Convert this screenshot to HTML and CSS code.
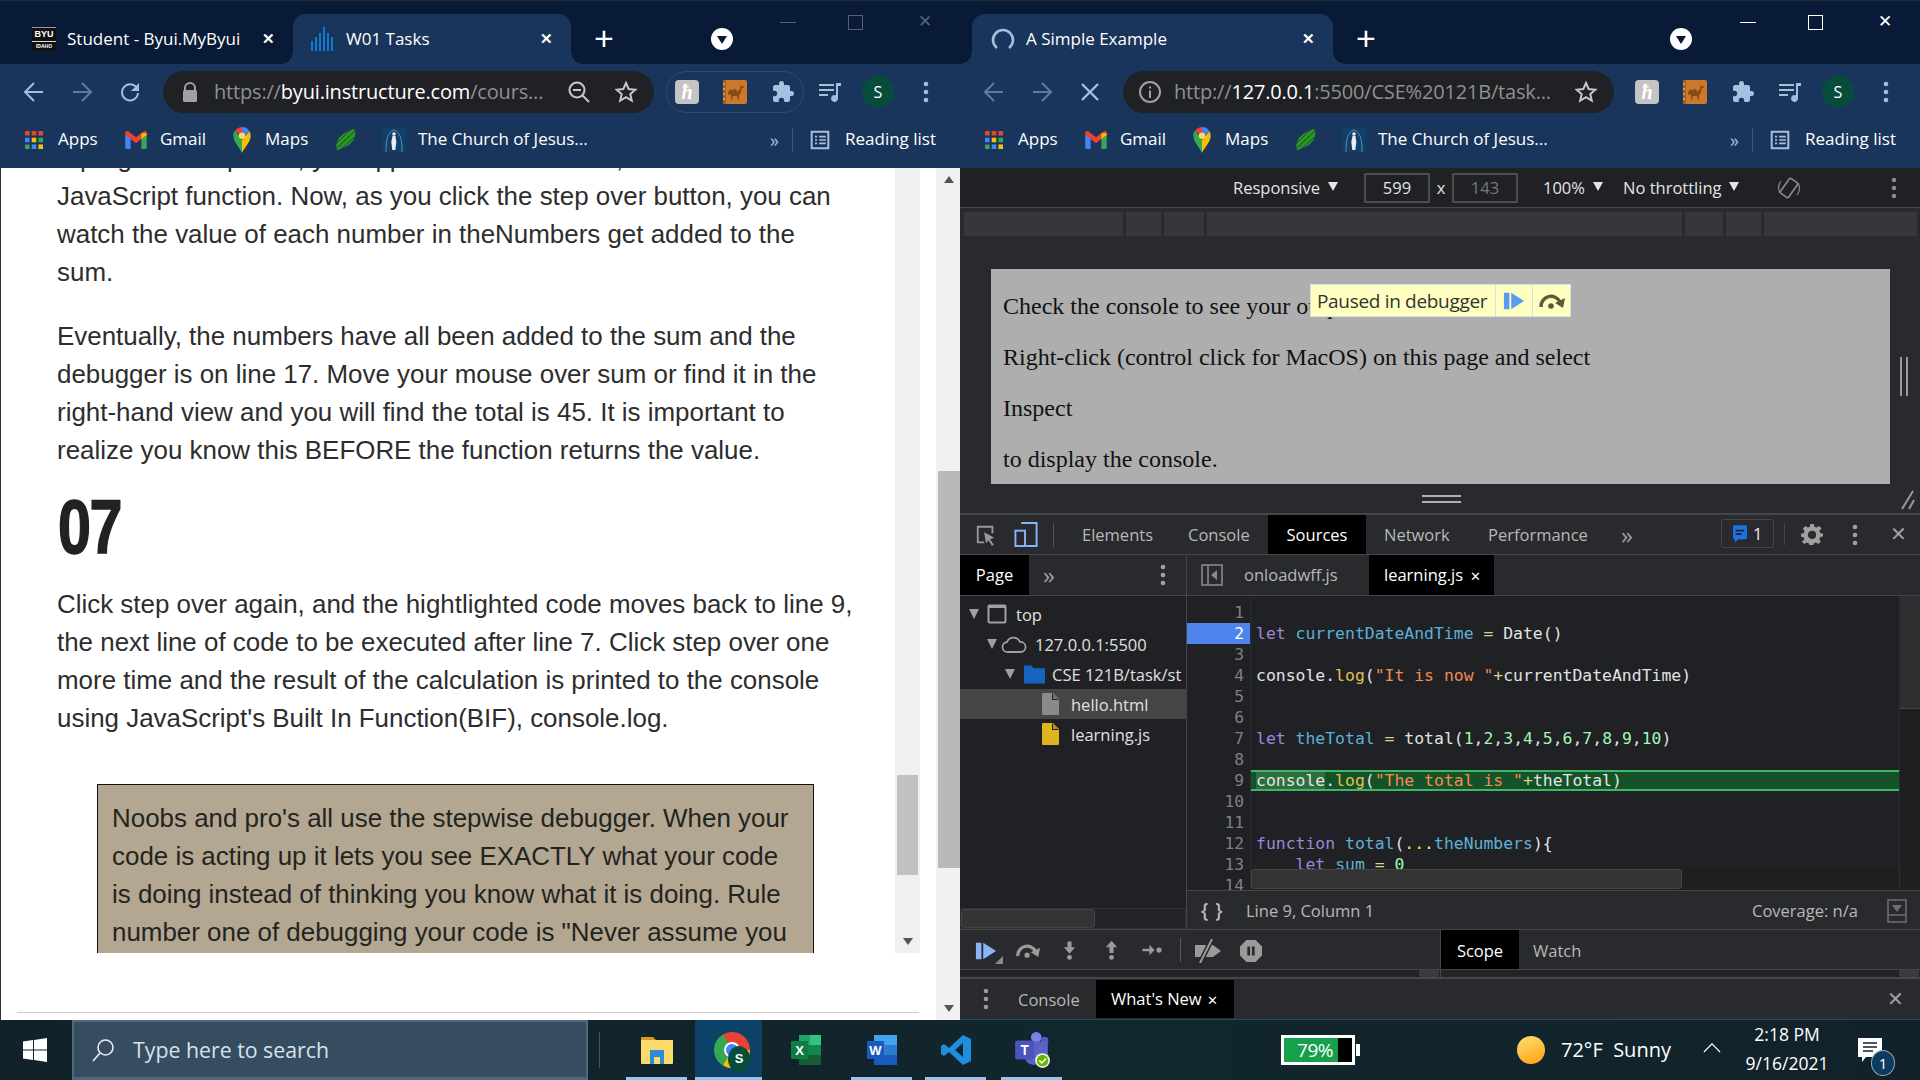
FILE: index.html
```html
<!DOCTYPE html>
<html lang="en">
<head>
<meta charset="utf-8">
<title>Debugger screenshot</title>
<link rel="stylesheet" href="styles.css">
</head>
<body>
<svg class="defs" aria-hidden="true">
  <symbol id="i-back" viewBox="0 0 24 24"><path d="M21 12H4M12 3l-9 9 9 9" fill="none" stroke="currentColor" stroke-width="2"/></symbol>
  <symbol id="i-fwd" viewBox="0 0 24 24"><path d="M3 12h17M12 3l9 9-9 9" fill="none" stroke="currentColor" stroke-width="2"/></symbol>
  <symbol id="i-reload" viewBox="0 0 24 24"><path d="M19.5 9.5A8 8 0 1 0 20 13" fill="none" stroke="currentColor" stroke-width="2"/><path d="M21 3v8h-8z" fill="currentColor"/></symbol>
  <symbol id="i-stop" viewBox="0 0 24 24"><path d="M4 4l16 16M20 4L4 20" fill="none" stroke="currentColor" stroke-width="2.4"/></symbol>
  <symbol id="i-star" viewBox="0 0 24 24"><path d="M12 3l2.7 6.1 6.6.6-5 4.4 1.5 6.5L12 17.2l-5.8 3.4 1.5-6.5-5-4.4 6.6-.6z" fill="none" stroke="currentColor" stroke-width="2"/></symbol>
  <symbol id="i-puzzle" viewBox="0 0 24 24"><path d="M20.5 11H19V7a2 2 0 0 0-2-2h-4V3.5a2.5 2.5 0 0 0-5 0V5H4a2 2 0 0 0-2 2v3.8h1.5a2.7 2.7 0 0 1 0 5.4H2V20a2 2 0 0 0 2 2h3.8v-1.5a2.7 2.7 0 0 1 5.4 0V22H17a2 2 0 0 0 2-2v-4h1.5a2.5 2.5 0 0 0 0-5z" fill="currentColor"/></symbol>
  <symbol id="i-media" viewBox="0 0 24 24"><path d="M1 4h15v2H1zM1 9h15v2H1zM1 14h9v2H1z" fill="currentColor"/><path d="M18 3h5v3h-3v12.5a3.5 3.5 0 1 1-2-3.2z" fill="currentColor"/></symbol>
  <symbol id="i-kebab" viewBox="0 0 6 24"><circle cx="3" cy="4" r="2.3" fill="currentColor"/><circle cx="3" cy="12" r="2.3" fill="currentColor"/><circle cx="3" cy="20" r="2.3" fill="currentColor"/></symbol>
  <symbol id="i-camel" viewBox="0 0 24 24"><rect width="24" height="24" rx="2" fill="#c9782c"/><rect x="0" y="0" width="3" height="24" fill="#a85f1c"/><path d="M1 3v2M1 8v2M1 13v2M1 18v2" stroke="#ffd9a8" stroke-width="1"/><path d="M5 13c1-3 3-5 5-2 1-3 3-3 4 0 1 1 2 0 3-3 0-2 1-3 3-2l1 2h-2c-1 3-1 6-3 7v5h-1l-1-4h-4l-1 4H8v-5c-1-1-2-1-2 1z" fill="#8a4b10"/></symbol>
  <symbol id="i-apps" viewBox="0 0 20 20"><path fill="#ea4335" d="M1 1h4.6v4.6H1zM7.7 1h4.6v4.6H7.7zM14.4 1H19v4.6h-4.6z"/><path fill="#4285f4" d="M1 7.7h4.6v4.6H1z"/><path fill="#fbbc04" d="M7.7 7.7h4.6v4.6H7.7z"/><path fill="#34a853" d="M14.4 7.7H19v4.6h-4.6zM1 14.4h4.6V19H1z"/><path fill="#4285f4" d="M7.7 14.4h4.6V19H7.7z"/><path fill="#fbbc04" d="M14.4 14.4H19V19h-4.6z"/></symbol>
  <symbol id="i-gmail" viewBox="0 0 24 20"><path fill="#4285f4" d="M0 4v14a2 2 0 0 0 2 2h4V8z"/><path fill="#34a853" d="M24 4v14a2 2 0 0 1-2 2h-4V8z"/><path fill="#ea4335" d="M0 2.5C0 .5 2.3-.6 4 .7L12 7l8-6.3c1.700-1.300 4-.2 4 1.800V4.500L18 9 12 13.500 6 9 0 4.500z"/><path fill="#fbbc04" d="M18 2.600L24 2.500v2L18 9z"/></symbol>
  <symbol id="i-maps" viewBox="0 0 16 24"><path fill="#34a853" d="M8 24C6 19 0 14 0 8c0-2 .6-3.500 1.700-4.800L8 12z"/><path fill="#fbbc04" d="M8 24c2-5 8-10 8-16 0-1.500-.4-2.800-1-4L8 12z"/><path fill="#4285f4" d="M15 4A8 8 0 0 0 8 0v5a3 3 0 0 1 3 3z"/><path fill="#ea4335" d="M8 0a8 8 0 0 0-6.300 3.200L5.500 7A3 3 0 0 1 8 5z"/><circle cx="8" cy="8" r="3" fill="#f5d76e"/></symbol>
  <symbol id="i-leaf" viewBox="0 0 24 24"><path d="M3 22C0 14 6 5 20 1c3 5 2 16-17 21z" fill="#2a9a1e"/><path d="M1 17L17 1M3 20L21 3M6 22L23 7M11 22l11-10" stroke="#1a355b" stroke-width=".9"/></symbol>
  <symbol id="i-temple" viewBox="0 0 24 24"><rect width="24" height="24" fill="#123f66"/><path d="M12 2c-6 2-8 8-8 22M12 2c6 2 8 8 8 22" stroke="#5c8db5" fill="none"/><circle cx="12" cy="6" r="1.800" fill="#e8eef4"/><path d="M10.500 8h3l.8 6-1 8h-3l-1-8z" fill="#e8eef4"/></symbol>
  <symbol id="i-read" viewBox="0 0 24 24"><path d="M2 2h20v20H2z" fill="none" stroke="currentColor" stroke-width="2.400"/><path d="M6 7h2.500v2H6zM11 7h8v2h-8zM6 11h2.500v2H6zM11 11h8v2h-8zM6 15h2.500v2H6zM11 15h8v2h-8z" fill="currentColor"/></symbol>
  <symbol id="i-gear" viewBox="0 0 24 24"><path fill="currentColor" fill-rule="evenodd" d="M10 1h4l.6 3 2.400 1 2.600-1.700 2.800 2.800L20 8.700l1 2.300 3 .6v3l-3 .6-1 2.400 1.700 2.600-2.800 2.800-2.600-1.700-2.400 1-.6 3h-4l-.6-3-2.400-1-2.600 1.700-2.800-2.800L3.800 17.900l-1-2.400-3-.6v-3l3-.6 1-2.300L2 6.100l2.800-2.800L7.400 5l2.400-1zM12 8.500a4.500 4.500 0 1 0 0 9 4.500 4.500 0 0 0 0-9z"/></symbol>
  <symbol id="i-file" viewBox="0 0 18 22"><path d="M1 0h10l6 6v15a1 1 0 0 1-1 1H1a1 1 0 0 1-1-1V1a1 1 0 0 1 1-1z" fill="currentColor"/><path d="M10 0l7 7h-7z" fill="#202124"/><path d="M11 1l5 5h-5z" fill="currentColor" opacity=".8"/></symbol>
  <symbol id="i-resume" viewBox="0 0 24 24"><path d="M1 3h6v18H1zM9 3l14 9-14 9z" fill="currentColor"/></symbol>
  <symbol id="i-over" viewBox="0 0 28 20"><path d="M3 16A10 10 0 0 1 22 11" fill="none" stroke="currentColor" stroke-width="3.500"/><path d="M27 7l-2 10-8-5z" fill="currentColor"/><circle cx="13" cy="15" r="2.800" fill="currentColor"/></symbol>
  <symbol id="i-into" viewBox="0 0 16 24"><path d="M5.500 1h5v7h4.500L8 16 1 8h4.500z" fill="currentColor"/><circle cx="8" cy="20.500" r="3" fill="currentColor"/></symbol>
  <symbol id="i-outof" viewBox="0 0 16 24"><path d="M8 0l7 8h-4.500v7h-5V8H1z" fill="currentColor"/><circle cx="8" cy="20.500" r="3" fill="currentColor"/></symbol>
  <symbol id="i-step" viewBox="0 0 24 16"><path d="M1 6.500h8V2l6 6-6 6V9.500H1z" fill="currentColor"/><circle cx="20" cy="8" r="3" fill="currentColor"/></symbol>
  <symbol id="i-deact" viewBox="0 0 28 24"><path d="M1 6h18l8 6-8 6H1z" fill="currentColor"/><path d="M18 0L6 24" stroke="#292a2d" stroke-width="5"/><path d="M18 0L6 24" stroke="currentColor" stroke-width="2"/></symbol>
  <symbol id="i-pause" viewBox="0 0 24 24"><path fill="currentColor" fill-rule="evenodd" d="M7 0h10l7 7v10l-7 7H7l-7-7V7zM8 7v10h3V7zM13 7v10h3V7z"/></symbol>
</svg>

<main class="windows">
  <section class="win">
    <div class="tabstrip">
      <div class="tab tab-back">
        <span class="byu">BYU<i>IDAHO</i></span>
        <span class="tab-title">Student - Byui.MyByui</span>
        <span class="tab-x">✕</span>
      </div>
      <div class="tab tab-active tab-w1">
        <svg class="fav" viewBox="0 0 24 24"><path d="M0 14h2v10H0zM4 10h2v14H4zM8 6h2v18H8zM12 0h2v24h-2zM16 6h2v18h-2zM20 10h2v14h-2z" fill="#0f7ad0"/></svg>
        <span class="tab-title">W01 Tasks</span>
        <span class="tab-x">✕</span>
      </div>
      <span class="plus plus-left">+</span>
      <span class="tabdrop tabdrop-left"></span>
      <div class="winctl winctl-dim"><span class="min"></span><span class="max"></span><span class="cls">✕</span></div>
    </div>
    <div class="toolbar">
      <span class="cell"><svg class="ic"><use href="#i-back"/></svg></span>
      <span class="cell dis"><svg class="ic"><use href="#i-fwd"/></svg></span>
      <span class="cell"><svg class="ic"><use href="#i-reload"/></svg></span>
      <div class="omni">
        <svg class="lock" viewBox="0 0 16 20"><path d="M3 9V6a5 5 0 0 1 10 0v3" fill="none" stroke="#a0a0a0" stroke-width="2"/><rect x="1" y="8" width="14" height="12" rx="1.500" fill="#a0a0a0"/></svg>
        <span class="url url-left">https://<b>byui.instructure.com</b>/cours...</span>
        <svg class="ic zoomic" viewBox="0 0 24 24"><circle cx="10" cy="10" r="7.500" fill="none" stroke="#c8c8c8" stroke-width="2"/><path d="M6 10h8M15.500 15.500L22 22" stroke="#c8c8c8" stroke-width="2"/></svg>
        <svg class="ic star"><use href="#i-star"/></svg>
      </div>
      <div class="pill">
        <span class="ext"><span class="ext-h">ħ</span></span>
        <span class="ext"><svg class="ic"><use href="#i-camel"/></svg></span>
        <span class="ext"><svg class="ic puzzle"><use href="#i-puzzle"/></svg></span>
      </div>
      <span class="cell media"><svg class="ic"><use href="#i-media"/></svg></span>
      <span class="cell cell-av"><span class="avatar">S</span></span>
      <span class="cell"><svg class="kebab"><use href="#i-kebab"/></svg></span>
    </div>
    <div class="bookmarks">
      <span class="bm bm-apps"><svg class="bmi"><use href="#i-apps"/></svg>Apps</span>
      <span class="bm bm-gmail"><svg class="bmi"><use href="#i-gmail"/></svg>Gmail</span>
      <span class="bm bm-maps"><svg class="bmi"><use href="#i-maps"/></svg>Maps</span>
      <span class="bm bm-leaf"><svg class="bmi"><use href="#i-leaf"/></svg></span>
      <span class="bm bm-temple"><svg class="bmi"><use href="#i-temple"/></svg>The Church of Jesus...</span>
      <span class="bm-more">»</span>
      <span class="bm-reading"><svg class="bmi readi"><use href="#i-read"/></svg>Reading list</span>
    </div>
    <div class="page">
      <div class="frame">
        <article class="article">
          <p>A program will pause, you appear in the total line, or in the<br>JavaScript function. Now, as you click the step over button, you can<br>watch the value of each number in theNumbers get added to the<br>sum.</p>
          <p>Eventually, the numbers have all been added to the sum and the<br>debugger is on line 17. Move your mouse over sum or find it in the<br>right-hand view and you will find the total is 45. It is important to<br>realize you know this BEFORE the function returns the value.</p>
          <h2 class="stepnum">07</h2>
          <p>Click step over again, and the hightlighted code moves back to line 9,<br>the next line of code to be executed after line 7. Click step over one<br>more time and the result of the calculation is printed to the console<br>using JavaScript's Built In Function(BIF), console.log.</p>
          <div class="callout">Noobs and pro's all use the stepwise debugger. When your<br>code is acting up it lets you see EXACTLY what your code<br>is doing instead of thinking you know what it is doing. Rule<br>number one of debugging your code is "Never assume you</div>
        </article>
        <div class="vbar vbar-inner"><span class="arr-up"></span><span class="arr-dn"></span><span class="vthumb"></span></div>
      </div>
      <div class="pagefoot"><span class="footline"></span></div>
      <div class="vbar vbar-outer"><span class="arr-up"></span><span class="arr-dn"></span><span class="vthumb"></span></div>
    </div>
  </section>

  <section class="win">
    <div class="tabstrip tabstrip-r">
      <div class="tab tab-active tab-simple">
        <svg class="fav" viewBox="0 0 24 24"><path d="M6 21A10 10 0 1 1 18 21" fill="none" stroke="#a9bcd9" stroke-width="2.600"/></svg>
        <span class="tab-title">A Simple Example</span>
        <span class="tab-x">✕</span>
      </div>
      <span class="plus plus-right">+</span>
      <span class="tabdrop tabdrop-right"></span>
      <div class="winctl"><span class="min"></span><span class="max"></span><span class="cls">✕</span></div>
    </div>
    <div class="toolbar">
      <span class="cell dis"><svg class="ic"><use href="#i-back"/></svg></span>
      <span class="cell dis"><svg class="ic"><use href="#i-fwd"/></svg></span>
      <span class="cell"><svg class="ic"><use href="#i-stop"/></svg></span>
      <div class="omni">
        <svg class="lock info" viewBox="0 0 24 24"><circle cx="12" cy="12" r="10" fill="none" stroke="#a0a0a0" stroke-width="2"/><path d="M11 10.500h2V18h-2zM11 6.500h2v2h-2z" fill="#a0a0a0"/></svg>
        <span class="url url-right">http://<b>127.0.0.1</b>:5500/CSE%20121B/task...</span>
        <svg class="ic star"><use href="#i-star"/></svg>
      </div>
      <div class="pill pill-none">
        <span class="ext"><span class="ext-h">ħ</span></span>
        <span class="ext"><svg class="ic"><use href="#i-camel"/></svg></span>
        <span class="ext"><svg class="ic puzzle"><use href="#i-puzzle"/></svg></span>
      </div>
      <span class="cell media"><svg class="ic"><use href="#i-media"/></svg></span>
      <span class="cell cell-av"><span class="avatar">S</span></span>
      <span class="cell"><svg class="kebab"><use href="#i-kebab"/></svg></span>
    </div>
    <div class="bookmarks">
      <span class="bm bm-apps"><svg class="bmi"><use href="#i-apps"/></svg>Apps</span>
      <span class="bm bm-gmail"><svg class="bmi"><use href="#i-gmail"/></svg>Gmail</span>
      <span class="bm bm-maps"><svg class="bmi"><use href="#i-maps"/></svg>Maps</span>
      <span class="bm bm-leaf"><svg class="bmi"><use href="#i-leaf"/></svg></span>
      <span class="bm bm-temple"><svg class="bmi"><use href="#i-temple"/></svg>The Church of Jesus...</span>
      <span class="bm-more">»</span>
      <span class="bm-reading"><svg class="bmi readi"><use href="#i-read"/></svg>Reading list</span>
    </div>

    <div class="devicebar">
      <span class="db-responsive">Responsive<i class="tri"></i></span>
      <span class="db-input">599</span>
      <span class="db-x">x</span>
      <span class="db-input db-dim">143</span>
      <span class="db-zoom">100%<i class="tri"></i></span>
      <span class="db-throttle">No throttling<i class="tri"></i></span>
      <svg class="db-rot" viewBox="0 0 24 24"><rect x="7" y="3" width="10" height="18" rx="1.500" transform="rotate(35 12 12)" fill="none" stroke="#8a8a8a" stroke-width="1.600"/><path d="M4 5A11 11 0 0 0 3 17M20 19A11 11 0 0 0 21 7" fill="none" stroke="#8a8a8a" stroke-width="1.200"/></svg>
      <svg class="kebab db-menu"><use href="#i-kebab"/></svg>
    </div>
    <div class="emul">
      <div class="mediabar"><span class="mb1"></span><span class="mb2"></span><span class="mb3"></span><span class="mb4"></span><span class="mb5"></span><span class="mb6"></span><span class="mb7"></span></div>
      <div class="viewport">
        <p>Check the console to see your output.</p>
        <p>Right-click (control click for MacOS) on this page and select</p>
        <p>Inspect</p>
        <p>to display the console.</p>
        <div class="paused">
          <span class="paused-t">Paused in debugger</span>
          <span class="paused-b"><svg class="pb-res"><use href="#i-resume"/></svg></span>
          <span class="paused-b"><svg class="pb-over"><use href="#i-over"/></svg></span>
        </div>
      </div>
      <span class="vp-handle"></span>
      <span class="vp-bottom"></span>
      <svg class="vp-corner" viewBox="0 0 14 20"><path d="M1 19L12 1M8 19l5-9" stroke="#9a9a9a" stroke-width="2" fill="none"/></svg>
    </div>

    <div class="devtools">
      <div class="dt-tabs">
        <svg class="dt-inspect" viewBox="0 0 22 24"><path d="M9 20H2V3h16v7" fill="none" stroke="#9a9a9a" stroke-width="2"/><path d="M9 9l11 6-4.500 1.500 4 6-2 1.200-3.800-6L11 21z" fill="#9a9a9a"/></svg>
        <svg class="dt-device" viewBox="0 0 24 26"><path d="M7 1h16v24H10" fill="none" stroke="#8ab4f8" stroke-width="2"/><rect x="1" y="9" width="10" height="16" fill="none" stroke="#8ab4f8" stroke-width="2"/></svg>
        <span class="dt-sep"></span>
        <span class="dt-tab t-el">Elements</span>
        <span class="dt-tab t-con">Console</span>
        <span class="dt-tab t-src on">Sources</span>
        <span class="dt-tab t-net">Network</span>
        <span class="dt-tab t-perf">Performance</span>
        <span class="chev">»</span>
        <span class="issues"><svg viewBox="0 0 16 20"><path d="M2 0h12a2 2 0 0 1 2 2v12a2 2 0 0 1-2 2H6l-4 4v-4a2 2 0 0 1-2-2V2a2 2 0 0 1 2-2z" fill="#1a73e8"/><path d="M3 5h10v2H3zM3 9h7v2H3z" fill="#202124"/></svg>1</span>
        <span class="dt-sep2"></span>
        <svg class="dt-gear"><use href="#i-gear"/></svg>
        <svg class="kebab dt-kebab"><use href="#i-kebab"/></svg>
        <span class="dt-close">✕</span>
      </div>
      <div class="src">
        <aside class="side">
          <div class="side-tabs"><span class="side-page">Page</span><span class="chev side-chev">»</span><svg class="kebab side-kebab"><use href="#i-kebab"/></svg></div>
          <ul class="tree">
            <li class="l0"><i class="caret"></i><svg class="t-frame" viewBox="0 0 20 20"><rect x="1.500" y="1.500" width="17" height="17" rx="1" fill="none" stroke="#a0a0a0" stroke-width="2"/><path d="M1 1h18v3H1z" fill="#a0a0a0"/></svg>top</li>
            <li class="l1"><i class="caret"></i><svg class="t-cloud" viewBox="0 0 26 20"><path d="M7 18a5 5 0 0 1-1-10 7 7 0 0 1 13 0 5 5 0 0 1 1 10z" fill="none" stroke="#a0a0a0" stroke-width="1.800"/></svg>127.0.0.1:5500</li>
            <li class="l2"><i class="caret"></i><svg class="t-folder" viewBox="0 0 22 20"><path d="M0 1h8l2 3h12v16H0z" fill="#1565c0"/></svg><span class="clip">CSE 121B/task/st</span></li>
            <li class="l3 sel"><svg class="t-file f-grey"><use href="#i-file"/></svg>hello.html</li>
            <li class="l3"><svg class="t-file f-js"><use href="#i-file"/></svg>learning.js</li>
          </ul>
          <div class="side-scroll"><span></span></div>
        </aside>
        <div class="editor">
          <div class="ed-tabs">
            <svg class="ed-toggle" viewBox="0 0 22 22"><rect x="1" y="1" width="20" height="20" fill="none" stroke="#8a8a8a" stroke-width="1.600"/><path d="M7 1v20" stroke="#8a8a8a" stroke-width="1.600"/><path d="M16 6v10l-6-5z" fill="#8a8a8a"/></svg>
            <span class="ed-tab">onloadwff.js</span>
            <span class="ed-tab on">learning.js <b>✕</b></span>
          </div>
          <div class="ed-body">
            <div class="gutter">
              <span>1</span><span class="exec">2</span><span>3</span><span>4</span><span>5</span><span>6</span><span>7</span><span>8</span><span>9</span><span>10</span><span>11</span><span>12</span><span>13</span><span>14</span>
            </div>
            <div class="code-wrap">
              <div class="code">
                <div class="ln"></div>
                <div class="ln"><em class="k">let</em> <em class="v">currentDateAndTime</em> <em class="o">=</em> Date()</div>
                <div class="ln"></div>
                <div class="ln">console.<em class="m">log</em>(<em class="s">"It is now "</em><em class="o">+</em>currentDateAndTime)</div>
                <div class="ln"></div>
                <div class="ln"></div>
                <div class="ln"><em class="k">let</em> <em class="v">theTotal</em> <em class="o">=</em> total(<em class="n">1</em>,<em class="n">2</em>,<em class="n">3</em>,<em class="n">4</em>,<em class="n">5</em>,<em class="n">6</em>,<em class="n">7</em>,<em class="n">8</em>,<em class="n">9</em>,<em class="n">10</em>)</div>
                <div class="ln"></div>
                <div class="ln ln-exec"><mark>console</mark>.<em class="m">log</em>(<em class="s">"The total is "</em><em class="o">+</em>theTotal)</div>
                <div class="ln"></div>
                <div class="ln"></div>
                <div class="ln"><em class="k">function</em> <em class="v">total</em>(<em class="y">...</em><em class="v">theNumbers</em>){</div>
                <div class="ln">    <em class="k">let</em> <em class="v">sum</em> <em class="o">=</em> <em class="n">0</em></div>
              </div>
              <div class="hscroll"><span></span></div>
            </div>
            <div class="vscroll"><span></span></div>
          </div>
          <div class="statusbar">
            <span class="st-braces">{ }</span>
            <span class="st-pos">Line 9, Column 1</span>
            <span class="st-cov">Coverage: n/a</span>
            <svg class="st-icon" viewBox="0 0 20 24"><rect x="1" y="1" width="18" height="22" fill="none" stroke="#707070" stroke-width="1.500"/><path d="M1 16h18" stroke="#707070" stroke-width="1.500"/><path d="M5 6h10l-5 7z" fill="#707070"/></svg>
          </div>
        </div>
      </div>
      <div class="dbg">
        <div class="dbg-left">
          <div class="dbg-tools">
            <span class="dbg-resume"><svg class="d-res"><use href="#i-resume"/></svg></span>
            <svg class="d-over"><use href="#i-over"/></svg>
            <svg class="d-into"><use href="#i-into"/></svg>
            <svg class="d-out"><use href="#i-outof"/></svg>
            <svg class="d-step"><use href="#i-step"/></svg>
            <span class="d-sep"></span>
            <svg class="d-deact"><use href="#i-deact"/></svg>
            <svg class="d-pause"><use href="#i-pause"/></svg>
          </div>
          <div class="dbg-scroll"><span></span></div>
        </div>
        <div class="dbg-right">
          <div class="dbg-tabs"><span class="scope">Scope</span><span class="watch">Watch</span></div>
          <div class="dbg-scroll"><span></span></div>
        </div>
      </div>
      <div class="drawer">
        <svg class="kebab dr-kebab"><use href="#i-kebab"/></svg>
        <span class="dr-con">Console</span>
        <span class="dr-new">What's New <b>✕</b></span>
        <span class="dr-close">✕</span>
      </div>
    </div>
  </section>
</main>

<footer class="taskbar">
  <svg class="tb-win" viewBox="0 0 24 24"><path d="M0 3.500l10-1.400V11.500H0zM11 2l13-2v11.500H11zM0 12.500h10v9.500L0 20.500zM11 12.500h13V24l-13-2z" fill="#fff"/></svg>
  <div class="tb-search">
    <svg viewBox="0 0 24 24"><circle cx="14.500" cy="9.500" r="7.500" fill="none" stroke="#e8eef2" stroke-width="1.600"/><path d="M9 15L2 23" stroke="#e8eef2" stroke-width="1.600"/></svg>
    <span>Type here to search</span>
  </div>
  <span class="tb-grip"></span>
  <span class="tb-app a-files"><svg viewBox="0 0 32 30"><path d="M0 2h12l3 3H0z" fill="#d89a1a"/><path d="M0 5h32v23a1 1 0 0 1-1 1H1a1 1 0 0 1-1-1z" fill="#fbd96a"/><path d="M9 15h14v14h-4v-7h-6v7H9z" fill="#2d8ad8"/></svg></span>
  <span class="tb-app a-chrome on"><span class="chrome"><i></i></span><span class="chrome-s">S</span></span>
  <span class="tb-app a-excel"><svg viewBox="0 0 32 32"><path d="M9 1h22v30H9z" fill="#21a366"/><path d="M20 1h11v10H20z" fill="#33c481"/><path d="M9 11h22v10H9z" fill="#107c41" opacity=".7"/><path d="M9 21h22v10H9z" fill="#185c37"/><rect x="1" y="7" width="17" height="18" fill="#107c41"/><text x="9.500" y="21" class="svgt">X</text></svg></span>
  <span class="tb-app a-word"><svg viewBox="0 0 32 32"><path d="M8 1h23v30H8z" fill="#2b7cd3"/><path d="M8 1h23v10H8z" fill="#41a5ee"/><path d="M8 21h23v10H8z" fill="#185abd"/><rect x="1" y="7" width="17" height="18" fill="#185abd"/><text x="9.500" y="21" class="svgt">W</text></svg></span>
  <span class="tb-app a-code"><svg viewBox="0 0 32 32"><path d="M23 1l8 4v22l-8 4L9 18l-5 4-3-2v-8l3-2 5 4zM23 9l-8 7 8 7z" fill="#1e8fdc"/></svg></span>
  <span class="tb-app a-teams"><svg viewBox="0 0 34 36"><circle cx="21" cy="6" r="5" fill="#7b83eb"/><circle cx="29" cy="9" r="3.500" fill="#5059c9"/><path d="M10 10h22v16a6 6 0 0 1-6 6h-8a8 8 0 0 1-8-8z" fill="#5b63c9"/><rect x="1" y="9" width="18" height="18" rx="2" fill="#4b53bc"/><text x="10" y="23" class="svgt">T</text><circle cx="27" cy="28" r="7" fill="#f4f4f4"/><circle cx="27" cy="28" r="5.500" fill="#6bb700"/><path d="M24 28l2.300 2.300 4-4.300" stroke="#fff" stroke-width="1.500" fill="none"/></svg></span>
  <span class="tb-batt"><span class="batt-box"><span class="batt-fill">79%</span></span><i></i></span>
  <span class="tb-sun"></span>
  <span class="tb-weather">72°F&nbsp; Sunny</span>
  <svg class="tb-caret" viewBox="0 0 20 12"><path d="M1 11l9-9 9 9" fill="none" stroke="#fff" stroke-width="1.300"/></svg>
  <span class="tb-clock"><span>2:18 PM</span><span>9/16/2021</span></span>
  <span class="tb-note"><svg viewBox="0 0 24 26"><path d="M0 0h24v19H8l-4 5v-5H0z" fill="#fff"/><path d="M5 5h14M5 9h14M5 13h10" stroke="#11222a" stroke-width="1.300"/></svg><b>1</b></span>
</footer>
</body>
</html>
```

FILE: styles.css
```css
* { box-sizing: border-box; }
html, body { margin: 0; padding: 0; }
body {
  width: 1920px; height: 1080px; overflow: hidden;
  display: flex; flex-direction: column;
  font-family: "Open Sans", "Noto Sans", sans-serif;
  background: #11222a; color: #fff;
}
.defs { position: absolute; width: 0; height: 0; }
svg { display: block; flex: none; }
ul { list-style: none; margin: 0; padding: 0; }

.windows { display: grid; grid-template-columns: 960px 960px; height: 1020px; }
.win { display: flex; flex-direction: column; height: 1020px; min-width: 0; overflow: hidden; }

/* tab strip */
.tabstrip { height: 64px; background: #081a36; display: flex; align-items: flex-end; font-size: 17px; border-top: 1px solid #1e2a3a; flex: none; }
.tabstrip-r { padding-left: 12px; }
.tab { height: 50px; display: flex; align-items: center; position: relative; flex: none; }
.tab-active { background: #1a355b; border-radius: 13px 13px 0 0; }
.tab-active::before, .tab-active::after { content: ""; position: absolute; bottom: 0; width: 12px; height: 12px; }
.tab-active::before { left: -12px; background: radial-gradient(circle at 0 0, transparent 11.500px, #1a355b 12px); }
.tab-active::after { right: -12px; background: radial-gradient(circle at 100% 0, transparent 11.500px, #1a355b 12px); }
.tab-back { width: 293px; padding-left: 32px; }
.tab-w1 { width: 278px; padding-left: 18px; }
.tab-simple { width: 361px; padding-left: 19px; }
.tab-title { white-space: nowrap; margin-left: 11px; padding-bottom: 2px; }
.tab-x { position: absolute; font-size: 15px; font-weight: 700; top: 14px; }
.tab-back .tab-x { left: 262px; }
.tab-w1 .tab-x { left: 247px; }
.tab-simple .tab-x { left: 330px; }
.byu { width: 24px; height: 24px; background: #111; font: bold 9px/11px "Liberation Sans", sans-serif; text-align: center; letter-spacing: 0; border-top: 1px solid #999; display: block; padding-top: 1px; }
.byu i { display: block; font-style: normal; font-size: 5px; line-height: 8px; border-top: 1px solid #ddd; margin-top: 1px; }
.fav { width: 24px; height: 24px; }
.plus { font: 400 34px/34px "Liberation Sans", sans-serif; align-self: flex-start; margin-top: 20px; flex: none; }
.plus-left { margin-left: 23px; }
.plus-right { margin-left: 23px; }
.tabdrop { width: 22px; height: 22px; border-radius: 50%; background: #fff; align-self: flex-start; margin-top: 27px; position: relative; flex: none; }
.tabdrop::after { content: ""; position: absolute; left: 6px; top: 8px; border: 5px solid transparent; border-top: 8px solid #081a36; border-bottom: 0; }
.tabdrop-left { margin-left: 97px; }
.tabdrop-right { margin-left: 294px; }
.winctl { display: flex; align-self: flex-start; margin-left: auto; width: 180px; height: 40px; position: relative; }
.winctl span { position: absolute; }
.winctl .min { left: 0; top: 21px; width: 16px; height: 1px; background: #fff; }
.winctl .max { left: 68px; top: 14px; width: 15px; height: 15px; border: 1px solid #fff; }
.winctl .cls { left: 138px; top: 10px; font-size: 17px; font-weight: 300; color: #fff; font-family: "Liberation Sans", sans-serif; }
.winctl-dim { opacity: .3; }

/* toolbar */
.toolbar { height: 54px; background: #1a355b; display: flex; align-items: center; padding: 2px 0 0 10px; flex: none; color: #a9bcd9; }
.cell { width: 48px; height: 40px; display: flex; align-items: center; justify-content: center; flex: none; }
.cell.dis { color: #5f7aa0; }
.ic { width: 24px; height: 24px; }
.omni { width: 491px; height: 42px; margin-left: 9px; background: #202124; border-radius: 21px; display: flex; align-items: center; position: relative; color: #c8c8c8; flex: none; }
.lock { width: 16px; height: 20px; margin-left: 19px; }
.lock.info { width: 24px; height: 24px; margin-left: 15px; }
.url { font-size: 20px; line-height: 24px; color: #8f9092; white-space: nowrap; margin-left: 16px; letter-spacing: -.18px; flex: none; }
.url-right { margin-left: 12px; }
.url b { color: #fff; font-weight: 400; }
.zoomic { position: absolute; left: 404px; top: 9px; }
.star { position: absolute; left: 451px; top: 9px; }
.pill { width: 138px; height: 42px; margin-left: 12px; border: 1px solid #32496e; border-radius: 21px; display: flex; flex: none; align-items: center; }
.pill-none { border-color: transparent; }
.ext { width: 48px; height: 40px; display: flex; align-items: center; justify-content: center; flex: none; }
.ext:first-child { margin-left: -4px; }
.ext-h { width: 24px; height: 24px; border-radius: 4px; background: #c4c4c4; color: #fff; font: italic 700 20px/24px "Liberation Serif", serif; text-align: center; }
.puzzle { color: #a9bfe0; }
.media { margin-left: 2px; }
.avatar { width: 32px; height: 32px; border-radius: 50%; background: #064e3b; color: #fff; font-size: 16px; line-height: 32px; text-align: center; }
.kebab { width: 6px; height: 24px; color: #a9bcd9; }

/* bookmarks */
.bookmarks { height: 50px; background: #1a355b; display: flex; align-items: center; padding: 0 0 6px 24px; font-size: 17px; flex: none; position: relative; }
.bm { display: flex; align-items: center; flex: none; white-space: nowrap; line-height: 22px; padding-bottom: 2px; }
.bmi { width: 20px; height: 20px; margin-right: 14px; margin-bottom: -2px; }
.bm-apps { width: 101px; }
.bm-gmail { width: 107px; }
.bm-gmail .bmi { width: 22px; height: 18px; margin-right: 13px; }
.bm-maps { width: 102px; }
.bm-maps .bmi { margin-right: 13px; height: 26px; }
.bm-leaf { width: 48px; }
.bm-leaf .bmi { width: 24px; height: 24px; }
.bm-temple { width: 388px; }
.bm-temple .bmi { width: 24px; height: 24px; margin-right: 12px; }
.bm-more { font-size: 18px; color: #a9bcd9; width: 28px; }
.bm-reading { display: flex; align-items: center; border-left: 1px solid #3e5880; height: 24px; padding: 0 0 2px 17px; margin-left: -6px; line-height: 22px; }
.readi { color: #a9bcd9; margin-right: 15px; margin-bottom: -2px; }

/* left page */
.page { flex: 1; min-height: 0; background: #fff; display: grid; grid-template-columns: 935px 25px; grid-template-rows: 785px 1fr; color: #2d2d2d; border-left: 1px solid #333; font-family: "Liberation Sans", Arial, sans-serif; }
.frame { display: flex; min-height: 0; overflow: hidden; grid-column: 1; grid-row: 1; padding-right: 16px; }
.article { flex: 1; min-width: 0; padding-left: 56px; margin-top: -29px; font-size: 25.930px; line-height: 38px; }
.article p { margin: 0 0 26px; white-space: nowrap; }
.stepnum { margin: 0 0 26px; height: 64px; font: 700 76px/64px "Liberation Sans", sans-serif; color: #222; transform: translateX(1px) scaleX(.78); transform-origin: left; letter-spacing: -2px; -webkit-text-stroke: 1.500px #222; }
.callout { width: 717px; height: 200px; margin: 47px 0 0 40px; background: #b3a792; border: 1px solid #111; padding: 14px 0 0 14px; white-space: nowrap; color: #24241f; }
.vbar { background: #f0f0f0; position: relative; flex: none; }
.vbar-inner { width: 25px; height: 785px; }
.vbar-inner .vthumb { position: absolute; left: 2px; right: 2px; top: 607px; height: 100px; background: #c1c1c1; }
.vbar-outer { grid-column: 2; grid-row: 1 / 3; background: #f1f1f1; }
.vbar-outer .vthumb { position: absolute; left: 2px; right: 1px; top: 303px; height: 397px; background: #b9b9b9; }
.arr-up, .arr-dn { position: absolute; left: 8px; border: 5px solid transparent; }
.arr-up { top: 8px; border-bottom: 7px solid #555; border-top: 0; }
.arr-dn { bottom: 8px; border-top: 7px solid #555; border-bottom: 0; }
.vbar-inner .arr-up { display: none; }
.pagefoot { grid-column: 1; grid-row: 2; padding: 59px 0 0 16px; }
.footline { display: block; width: 902px; height: 1px; background: #c7cdd1; }

/* device toolbar */
.devicebar { height: 40px; background: #202124; border-bottom: 1px solid #4a4a4a; display: flex; align-items: center; font-size: 16.500px; color: #e4e4e4; flex: none; white-space: nowrap; }
.tri { display: inline-block; margin-left: 8px; border: 5px solid transparent; border-top: 9px solid #e4e4e4; border-bottom: 0; vertical-align: 3px; }
.db-responsive { margin-left: 273px; width: 131px; }
.db-input { width: 66px; height: 30px; border: 2px solid #4c4d50; text-align: center; line-height: 26px; flex: none; }
.db-dim { color: #77787a; }
.db-x { width: 22px; text-align: center; }
.db-zoom { margin-left: 25px; width: 80px; }
.db-throttle { width: 130px; }
.db-rot { width: 24px; height: 24px; margin-left: 24px; }
.db-menu { margin-left: 90px; color: #8a8a8a; }

.emul { height: 305px; background: #292a2d; position: relative; flex: none; padding-top: 4px; }
.mediabar { height: 24px; margin: 0 3px 0 4px; display: grid; grid-template-columns: 159px 35px 40px 475px 38px 35px 1fr; column-gap: 3px; }
.mediabar span { background: #36373b; }
.viewport { width: 899px; height: 215px; margin: 33px 0 0 31px; background: #aeaeae; color: #111; font: 24px/27px "Liberation Serif", "Times New Roman", serif; padding: 24px 12px; position: relative; }
.viewport p { margin: 0 0 24px; }
.paused { position: absolute; left: 319px; top: 15px; width: 261px; height: 33px; background: #ffffc2; border: 1px solid #ddd; display: flex; align-items: center; color: #333; font: 19px/32px "Open Sans", sans-serif; letter-spacing: -.32px; }
.paused-t { width: 186px; padding-left: 6px; white-space: nowrap; border-right: 1px solid #ddd; height: 31px; }
.paused-b { width: 37px; height: 31px; border-right: 1px solid #ddd; display: flex; align-items: center; justify-content: center; }
.paused-b:last-child { border: 0; }
.pb-res { width: 22px; height: 22px; color: #5b9bf0; }
.pb-over { width: 28px; height: 20px; color: #5b5b3c; }
.vp-handle { position: absolute; left: 940px; top: 149px; width: 8px; height: 39px; border-left: 2px solid #9a9a9a; border-right: 2px solid #9a9a9a; }
.vp-bottom { position: absolute; left: 462px; top: 287px; width: 39px; height: 8px; border-top: 2px solid #b0b0b0; border-bottom: 2px solid #b0b0b0; }
.vp-corner { position: absolute; right: 5px; top: 282px; width: 14px; height: 20px; }

/* devtools */
.devtools { flex: 1; min-height: 0; background: #292a2d; border-top: 2px solid #45474a; display: flex; flex-direction: column; color: #b8b8b8; font-size: 16.500px; }
.dt-tabs { height: 40px; display: flex; align-items: center; flex: none; border-bottom: 1px solid #45474a; position: relative; white-space: nowrap; }
.dt-inspect { width: 22px; height: 22px; margin-left: 15px; }
.dt-device { width: 24px; height: 25px; margin-left: 17px; }
.dt-sep { width: 1px; height: 24px; background: #55575a; margin: 0 8px 0 15px; }
.dt-tab { height: 39px; line-height: 39px; flex: none; }
.t-el { margin-left: 20px; width: 106px; }
.t-con { width: 80px; }
.t-src { width: 98px; text-align: center; }
.t-src.on { background: #000; color: #fff; }
.t-net { margin-left: 18px; width: 104px; }
.t-perf { width: 133px; }
.chev { font-size: 24px; line-height: 30px; color: #a0a0a0; }
.issues { position: absolute; left: 761px; top: 4px; width: 53px; height: 29px; border: 1px solid #45474a; border-radius: 3px; display: flex; align-items: center; gap: 6px; padding-left: 11px; color: #e8e8e8; }
.issues svg { width: 14px; height: 18px; }
.dt-sep2 { position: absolute; left: 824px; top: 8px; width: 1px; height: 22px; background: #45474a; }
.dt-gear { position: absolute; left: 841px; top: 8px; width: 22px; height: 22px; color: #a0a0a0; }
.dt-kebab { position: absolute; left: 892px; top: 8px; color: #a0a0a0; }
.dt-close { position: absolute; left: 930px; top: 5px; font-size: 20px; color: #a0a0a0; }

.src { display: grid; grid-template-columns: 227px 1fr; height: 375px; flex: none; border-bottom: 1px solid #45474a; }
.side { display: flex; flex-direction: column; border-right: 1px solid #45474a; background: #202124; min-width: 0; }
.side-tabs { height: 41px; background: #292a2d; border-bottom: 1px solid #45474a; display: flex; align-items: center; flex: none; position: relative; }
.side-page { width: 69px; height: 40px; background: #000; color: #fff; text-align: center; line-height: 40px; }
.side-chev { margin-left: 14px; }
.side-kebab { position: absolute; left: 200px; top: 8px; color: #a0a0a0; }
.tree { flex: 1; padding-top: 3px; color: #e0e0e0; }
.tree li { height: 30px; display: flex; align-items: center; white-space: nowrap; overflow: hidden; }
.caret { display: block; border: 5.500px solid transparent; border-top: 10px solid #a0a0a0; border-bottom: 0; flex: none; }
.l0 { padding-left: 9px; }
.l0 .t-frame { width: 20px; height: 20px; margin: 0 9px 0 8px; }
.l1 { padding-left: 27px; }
.l1 .t-cloud { width: 26px; height: 22px; margin: 0 8px 0 4px; }
.l2 { padding-left: 45px; }
.t-folder { width: 21px; height: 20px; margin: 0 7px 0 9px; }
.l3 { padding-left: 82px; }
.sel { background: #454545; margin-top: 0; }
.t-file { width: 18px; height: 24px; margin-right: 11px; }
.f-grey { color: #8a8a8a; }
.f-js { color: #e0b420; }
.clip { overflow: hidden; width: 135px; }
.side-scroll { height: 21px; background: #232427; flex: none; border: 1px solid #2e2f32; }
.side-scroll span { display: block; width: 134px; height: 19px; background: #333436; border-radius: 3px; border: 1px solid #444; }

.editor { display: flex; flex-direction: column; min-width: 0; }
.ed-tabs { height: 41px; border-bottom: 1px solid #45474a; display: flex; align-items: center; flex: none; }
.ed-toggle { width: 22px; height: 22px; margin-left: 14px; }
.ed-tab { height: 40px; line-height: 40px; flex: none; white-space: nowrap; }
.ed-tab:nth-of-type(1) { margin-left: 21px; width: 125px; }
.ed-tab.on { background: #000; color: #fff; width: 125px; padding-left: 15px; }
.ed-tab b { font-weight: 400; font-size: 13px; margin-left: 3px; }
.ed-body { height: 294px; display: flex; background: #202124; flex: none; }
.gutter { width: 64px; padding-top: 6px; flex: none; border-right: 1px solid #2c2d30; font: 16.300px/21px "DejaVu Sans Mono", monospace; color: #7e8084; text-align: right; overflow: hidden; }
.gutter span { display: block; height: 21px; padding-right: 6px; }
.gutter .exec { background: #4f84ec; color: #fff; position: relative; }
.gutter .exec::after { content: ""; position: absolute; right: -4px; top: 0; border: 10.500px solid transparent; border-left: 4px solid #4f84ec; border-right: 0; }
.code-wrap { flex: 1; min-width: 0; display: flex; flex-direction: column; }
.code { height: 273px; padding-top: 6px; overflow: hidden; font: 16.430px/21px "DejaVu Sans Mono", monospace; color: #e3e3e3; flex: none; }
.ln { height: 21px; padding-left: 5px; white-space: pre; }
.ln em { font-style: normal; }
.k { color: #9d87d8; } .v { color: #5db0d7; } .o { color: #d5d58e; } .m { color: #e0c050; } .s { color: #f28b54; } .n { color: #a1f7b5; } .y { color: #eeee55; }
.ln-exec { background: #155228; border-top: 2px solid #3cb868; border-bottom: 2px solid #3cb868; line-height: 17px; }
.ln-exec mark { background: #2e6e3c; color: inherit; display: inline-block; }
.hscroll { height: 21px; background: #1f1f20; flex: none; }
.hscroll span { display: block; width: 431px; height: 20px; background: #333333; border: 1px solid #444; border-radius: 3px; }
.vscroll { width: 21px; background: #1f1f20; flex: none; border-left: 1px solid #2c2d30; }
.vscroll span { display: block; height: 113px; background: #2e2f31; border-bottom: 1px solid #444; }
.statusbar { flex: 1; display: flex; align-items: center; border-top: 1px solid #45474a; position: relative; white-space: nowrap; }
.st-braces { margin-left: 14px; font-size: 19px; font-weight: 600; letter-spacing: 1px; width: 45px; }
.st-cov { position: absolute; left: 565px; }
.st-icon { position: absolute; left: 700px; top: 8px; width: 20px; height: 24px; }

.dbg { display: grid; grid-template-columns: 481px 1fr; height: 48px; flex: none; border-bottom: 1px solid #45474a; }
.dbg-left { border-right: 1px solid #45474a; }
.dbg-tools { height: 40px; display: flex; align-items: center; color: #9a9a9a; position: relative; border-bottom: 1px solid #45474a; }
.dbg-tools svg, .d-sep { position: absolute; }
.dbg-resume { position: absolute; left: 15px; top: 10px; width: 28px; height: 26px; }
.dbg-resume::after { content: ""; position: absolute; right: 0; bottom: 2px; border: 4px solid transparent; border-right-color: #8a8a8a; border-bottom-color: #8a8a8a; }
.d-res { left: 0; top: 0; width: 22px; height: 22px; color: #8ab4f8; }
.d-over { left: 55px; top: 11px; width: 26px; height: 19px; }
.d-into { left: 103px; top: 10px; width: 13px; height: 21px; }
.d-out { left: 145px; top: 10px; width: 13px; height: 21px; }
.d-step { left: 181px; top: 13px; width: 22px; height: 14px; }
.d-sep { left: 220px; top: 8px; width: 1px; height: 24px; background: #5a5a5a; }
.d-deact { left: 234px; top: 9px; width: 28px; height: 24px; }
.d-pause { left: 280px; top: 10px; width: 22px; height: 22px; }
.dbg-scroll { height: 7px; position: relative; background: #232427; }
.dbg-scroll span { position: absolute; right: 1px; top: 0; width: 20px; height: 7px; background: #3a3b3e; border-radius: 2px; }
.dbg-tabs { height: 40px; display: flex; align-items: center; border-bottom: 1px solid #45474a; }
.scope { width: 78px; height: 39px; background: #000; color: #fff; line-height: 41px; text-align: center; }
.watch { margin-left: 14px; padding-top: 2px; }
.drawer { flex: 1; display: flex; align-items: center; position: relative; white-space: nowrap; border-top: 1px solid #45474a; border-bottom: 1px solid #2a4a5e; }
.dr-kebab { margin-left: 23px; color: #9a9a9a; }
.dr-con { margin-left: 29px; width: 78px; }
.dr-new { height: 38px; line-height: 38px; width: 138px; padding-left: 15px; background: #000; color: #fff; }
.dr-new b { font-weight: 400; font-size: 13px; margin-left: 1px; }
.dr-close { position: absolute; left: 927px; top: 6px; font-size: 20px; color: #a0a0a0; }

/* taskbar */
.taskbar { height: 60px; flex: none; background: linear-gradient(90deg, #11222a, #12262e 60%, #11222a); display: flex; align-items: center; position: relative; color: #fff; border-right: 7px solid transparent; }
.tb-win { width: 24px; height: 24px; margin-left: 23px; }
.tb-search { width: 516px; height: 60px; margin-left: 25px; background: #364c60; border: 2px solid #51677b; border-bottom-width: 3px; display: flex; align-items: center; padding-left: 17px; font-size: 21.300px; color: #d8e2ea; }
.tb-search svg { width: 24px; height: 24px; margin-right: 18px; }
.tb-grip { width: 1px; height: 36px; background: #44555e; margin-left: 11px; }
.tb-app { height: 60px; display: flex; align-items: center; justify-content: center; position: relative; flex: none; width: 61px; }
.tb-app::after { content: ""; position: absolute; left: 0; right: 0; bottom: 0; height: 3px; background: #99c4e8; }
.tb-app svg { width: 32px; height: 32px; }
.svgt { fill: #fff; font: bold 13px "Liberation Sans", sans-serif; text-anchor: middle; }
.a-files { margin-left: 26px; }
.a-chrome { width: 67px; margin-left: 8px; background: #0c4268; }
.a-excel { margin-left: 13px; }
.a-excel::after { display: none; }
.a-word { margin-left: 15px; }
.a-code { margin-left: 13px; }
.a-teams { margin-left: 15px; }
.a-teams svg { width: 36px; height: 38px; }
.chrome { width: 36px; height: 36px; border-radius: 50%; background: conic-gradient(#ea4335 0 120deg, #fbbc04 120deg 240deg, #34a853 240deg 360deg); display: flex; align-items: center; justify-content: center; margin-left: 6px; transform: rotate(-30deg); }
.chrome i { width: 16px; height: 16px; border-radius: 50%; background: #4285f4; border: 2px solid #fff; }
.chrome-s { position: absolute; left: 33px; top: 26px; width: 22px; height: 26px; border-radius: 50%; background: #064e3b; font: bold 13px/26px "Liberation Sans", sans-serif; text-align: center; }
.tb-batt { position: absolute; left: 1281px; top: 15px; display: flex; align-items: center; }
.batt-box { width: 74px; height: 30px; border: 3px solid #fff; background: #000; display: block; }
.batt-fill { display: block; width: 54px; height: 24px; background: #16a04c; font-size: 19px; line-height: 24px; text-align: center; letter-spacing: -.5px; padding-left: 8px; white-space: nowrap; }
.tb-batt i { width: 4px; height: 12px; background: #fff; margin-left: 1px; }
.tb-sun { position: absolute; left: 1517px; top: 16px; width: 28px; height: 28px; border-radius: 50%; background: linear-gradient(160deg, #ffe070, #ffa010); }
.tb-weather { position: absolute; left: 1561px; top: 16px; font-size: 20px; line-height: 28px; white-space: nowrap; }
.tb-caret { position: absolute; left: 1703px; top: 22px; width: 18px; height: 11px; }
.tb-clock { position: absolute; left: 1737px; top: 2px; width: 100px; display: flex; flex-direction: column; align-items: center; gap: 4px; font-size: 17.500px; line-height: 25px; }
.tb-note { position: absolute; left: 1858px; top: 18px; width: 24px; height: 26px; }
.tb-note svg { width: 24px; height: 26px; }
.tb-note b { position: absolute; left: 13px; top: 12px; width: 24px; height: 26px; border-radius: 50%; background: #0e3a5e; border: 1px solid #8ab; font: 400 15px/24px "Open Sans", sans-serif; text-align: center; }
```
